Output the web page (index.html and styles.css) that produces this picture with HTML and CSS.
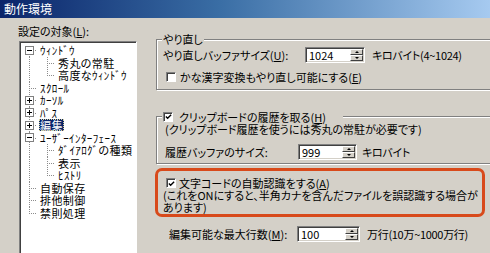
FILE: index.html
```html
<!DOCTYPE html>
<html lang="ja">
<head>
<meta charset="utf-8">
<title>動作環境</title>
<link rel="stylesheet" href="styles.css">
</head>
<body>
<div class="titlebar">動作環境</div>
<div class="main">
  <div class="left">
    <div class="label">設定の対象(<u>L</u>):</div>
    <div class="listbox">
      <div class="row"><span class="c c-first"><svg class="box" width="9" height="9" viewBox="0 0 9 9"><rect x="0.5" y="0.5" width="8" height="8" fill="#fff" stroke="#808080"/><path d="M2 4.5H7" stroke="#000"/></svg></span><span class="t">ｳｨﾝﾄﾞｳ</span></div>
      <div class="row"><span class="c c-v"></span><span class="c c-t"></span><span class="t">秀丸の常駐</span></div>
      <div class="row"><span class="c c-v"></span><span class="c c-l"></span><span class="t">高度なｳｨﾝﾄﾞｳ</span></div>
      <div class="row"><span class="c c-t"></span><span class="t">ｽｸﾛｰﾙ</span></div>
      <div class="row"><span class="c c-t"><svg class="box" width="9" height="9" viewBox="0 0 9 9"><rect x="0.5" y="0.5" width="8" height="8" fill="#fff" stroke="#808080"/><path d="M2 4.5H7M4.5 2V7" stroke="#000"/></svg></span><span class="t">ｶｰｿﾙ</span></div>
      <div class="row"><span class="c c-t"><svg class="box" width="9" height="9" viewBox="0 0 9 9"><rect x="0.5" y="0.5" width="8" height="8" fill="#fff" stroke="#808080"/><path d="M2 4.5H7M4.5 2V7" stroke="#000"/></svg></span><span class="t">ﾊﾟｽ</span></div>
      <div class="row"><span class="c c-t"><svg class="box" width="9" height="9" viewBox="0 0 9 9"><rect x="0.5" y="0.5" width="8" height="8" fill="#fff" stroke="#808080"/><path d="M2 4.5H7M4.5 2V7" stroke="#000"/></svg></span><span class="t sel">編集</span></div>
      <div class="row"><span class="c c-t"><svg class="box" width="9" height="9" viewBox="0 0 9 9"><rect x="0.5" y="0.5" width="8" height="8" fill="#fff" stroke="#808080"/><path d="M2 4.5H7" stroke="#000"/></svg></span><span class="t">ﾕｰｻﾞｰｲﾝﾀｰﾌｪｰｽ</span></div>
      <div class="row"><span class="c c-v"></span><span class="c c-t"></span><span class="t">ﾀﾞｲｱﾛｸﾞの種類</span></div>
      <div class="row"><span class="c c-v"></span><span class="c c-t"></span><span class="t">表示</span></div>
      <div class="row"><span class="c c-v"></span><span class="c c-l"></span><span class="t">ﾋｽﾄﾘ</span></div>
      <div class="row"><span class="c c-t"></span><span class="t">自動保存</span></div>
      <div class="row"><span class="c c-t"></span><span class="t">排他制御</span></div>
      <div class="row"><span class="c c-l"></span><span class="t">禁則処理</span></div>
    </div>
  </div>

  <div class="right">
    <div class="group g1">
      <div class="legend">やり直し</div>
      <div class="field f1">
        <span class="flabel">やり直しバッファサイズ(<u>U</u>):</span>
        <span class="spinbox"><span class="val">1024</span><span class="spin"><span class="btn"><span class="up"></span></span><span class="btn"><span class="dn"></span></span></span></span>
        <span class="unit">キロバイト(4~1024)</span>
      </div>
      <div class="check c1"><span class="cb"></span><span class="ctext">かな漢字変換もやり直し可能にする(<u>E</u>)</span></div>
    </div>

    <div class="group g2">
      <div class="legend lg2"><span class="cb on"><svg width="8" height="8" viewBox="0 0 8 8"><path d="M1 3.5L3 5.5L7 1.5" stroke="#000" stroke-width="1.6" fill="none"/></svg></span><span class="ctext">クリップボードの履歴を取る(<u>H</u>)</span></div>
      <div class="note">(クリップボード履歴を使うには秀丸の常駐が必要です)</div>
      <div class="field f2">
        <span class="flabel">履歴バッファのサイズ:</span>
        <span class="spinbox"><span class="val">999</span><span class="spin"><span class="btn"><span class="up"></span></span><span class="btn"><span class="dn"></span></span></span></span>
        <span class="unit">キロバイト</span>
      </div>
    </div>

    <div class="highlight">
      <div class="check c3"><span class="cb on"><svg width="8" height="8" viewBox="0 0 8 8"><path d="M1 3.5L3 5.5L7 1.5" stroke="#000" stroke-width="1.6" fill="none"/></svg></span><span class="ctext">文字コードの自動認識をする(<u>A</u>)</span></div>
      <div class="warn">(これをONにすると、半角カナを含んだファイルを誤認識する場合が</div>
      <div class="warn">あります)</div>
    </div>

    <div class="field f3">
      <span class="flabel">編集可能な最大行数(<u>M</u>):</span>
      <span class="spinbox"><span class="val">100</span><span class="spin"><span class="btn"><span class="up"></span></span><span class="btn"><span class="dn"></span></span></span></span>
      <span class="unit">万行(10万~1000万行)</span>
    </div>
  </div>
</div>
</body>
</html>
```

FILE: styles.css
```css
* { box-sizing: border-box; }
html, body { margin: 0; padding: 0; }
body {
  width: 490px;
  height: 253px;
  overflow: hidden;
  background: #d4d0c8;
  font-family: "Noto Sans CJK JP", "Noto Sans", sans-serif;
  font-size: 11px;
  line-height: 13px;
  color: #000;
  font-feature-settings: "palt";
}
u { text-decoration: underline; text-underline-offset: 1px; }

.titlebar {
  height: 18px;
  background: linear-gradient(to right, #0a246a, #3a6ea5 45%, #a6caf0);
  color: #fff;
  font-size: 12px;
  line-height: 18px;
  padding-left: 4px;
  white-space: nowrap;
}

.main { display: flex; }

/* left tree */
.left { width: 156px; flex: none; padding-top: 6px; }
.label { line-height: 14px; margin-left: 18px; margin-bottom: 3px; white-space: nowrap; }
.listbox {
  margin-left: 19px;
  width: 118px;
  height: 230px;
  background: #fff;
  border: 1px solid;
  border-color: #808080 #fff #fff #808080;
  box-shadow: inset 1px 1px 0 #404040;
  padding: 2px 0 0 1px;
  overflow: hidden;
}
.row { display: flex; height: 12.5px; align-items: center; white-space: nowrap; }
.c {
  flex: none;
  width: 18px;
  height: 12.5px;
  display: flex;
  align-items: center;
  background-repeat: no-repeat;
  --dv: repeating-linear-gradient(to bottom, #8c8c8c 0 1px, transparent 1px 2px);
  --dh: repeating-linear-gradient(to right, #8c8c8c 0 1px, transparent 1px 2px);
}
.c-t { background-image: var(--dv), var(--dh); background-size: 1px 100%, 8px 1px; background-position: 8px 0, 8px 6px; }
.c-l { background-image: var(--dv), var(--dh); background-size: 1px 6px, 8px 1px; background-position: 8px 0, 8px 6px; }
.c-v { background-image: var(--dv); background-size: 1px 100%; background-position: 8px 0; }
.c-first { background-image: var(--dv), var(--dh); background-size: 1px 7px, 8px 1px; background-position: 8px 6px, 8px 6px; }
.box { display: block; margin-left: 4px; }
.t { line-height: 12px; padding: 0 1px; letter-spacing: 0.4px; }
.t.sel { background: #0a246a; color: #fff; outline: 1px dotted #d8d4a0; outline-offset: -1px; }

/* right */
.right { width: 340px; flex: none; }
.group {
  border: 1px solid #808080;
  box-shadow: inset 1px 1px 0 #fff, 1px 1px 0 #fff;
  padding: 0 0 0 6px;
  display: flex;
  flex-direction: column;
  align-items: flex-start;
}
.legend {
  margin: -7px 0 0 -1px;
  padding: 0 1px;
  background: #d4d0c8;
  line-height: 13px;
  height: 13px;
  white-space: nowrap;
  display: flex;
  align-items: center;
}
.g1 { margin-top: 21px; padding-bottom: 5px; }
.g2 { margin-top: 26px; padding-bottom: 3px; }
.lg2 { padding-right: 17px; }

.field { display: flex; align-items: center; height: 16px; line-height: 13px; white-space: nowrap; }
.flabel { flex: none; }
.f1 { margin-top: 1px; }
.f1 .flabel { width: 142px; }
.f1 .spinbox { width: 60px; }
.f1 .unit { margin-left: 7px; }
.f2 { margin-top: 8px; margin-left: 2px; }
.f2 .flabel { width: 133px; }
.f2 .spinbox { width: 59px; }
.f2 .unit { margin-left: 5px; }
.f3 { margin-top: 9px; margin-left: 13px; }
.f3 .flabel { width: 128px; }
.f3 .spinbox { width: 63px; }
.f3 .unit { margin-left: 7px; }
.unit { letter-spacing: -0.3px; }

.spinbox {
  flex: none;
  height: 16px;
  display: flex;
  background: #fff;
  border: 1px solid;
  border-color: #808080 #fff #fff #808080;
  box-shadow: inset 1px 1px 0 #404040, inset -1px -1px 0 #d4d0c8;
  padding: 1px;
}
.val { flex: 1; line-height: 12px; padding-left: 2px; font-size: 11px; }
.spin { width: 13px; display: flex; flex-direction: column; }
.btn {
  flex: 1;
  background: #d4d0c8;
  border: 1px solid;
  border-color: #fff #404040 #404040 #fff;
  display: flex;
  align-items: center;
  justify-content: center;
}
.up { width: 0; height: 0; border-left: 2px solid transparent; border-right: 2px solid transparent; border-bottom: 2px solid #000; }
.dn { width: 0; height: 0; border-left: 2px solid transparent; border-right: 2px solid transparent; border-top: 2px solid #000; }

.check { display: flex; align-items: center; white-space: nowrap; }
.ctext { line-height: 12px; }
.cb {
  flex: none;
  width: 10px;
  height: 10px;
  background: #fff;
  border: 1px solid;
  border-color: #808080 #fff #fff #808080;
  box-shadow: inset 1px 1px 0 #404040;
  display: flex;
  align-items: center;
  justify-content: center;
}
.cb svg { display: block; margin: 1px 0 0 1px; }
.c1 { margin-top: 7px; margin-left: 3px; height: 14px; }
.c1 .ctext { margin-left: 4px; }
.lg2 .ctext { margin-left: 6px; }

.note { margin-left: 2px; line-height: 13px; white-space: nowrap; }

.highlight {
  margin: 4px 0 0 -1px;
  width: 330px;
  border: 3px solid #d84a1b;
  border-radius: 7px;
  padding: 6px 0 1px 5px;
}
.c3 { height: 12px; margin-left: 3px; }
.c3 .ctext { margin-left: 3px; }
.warn { height: 12px; line-height: 12px; white-space: nowrap; }
```
